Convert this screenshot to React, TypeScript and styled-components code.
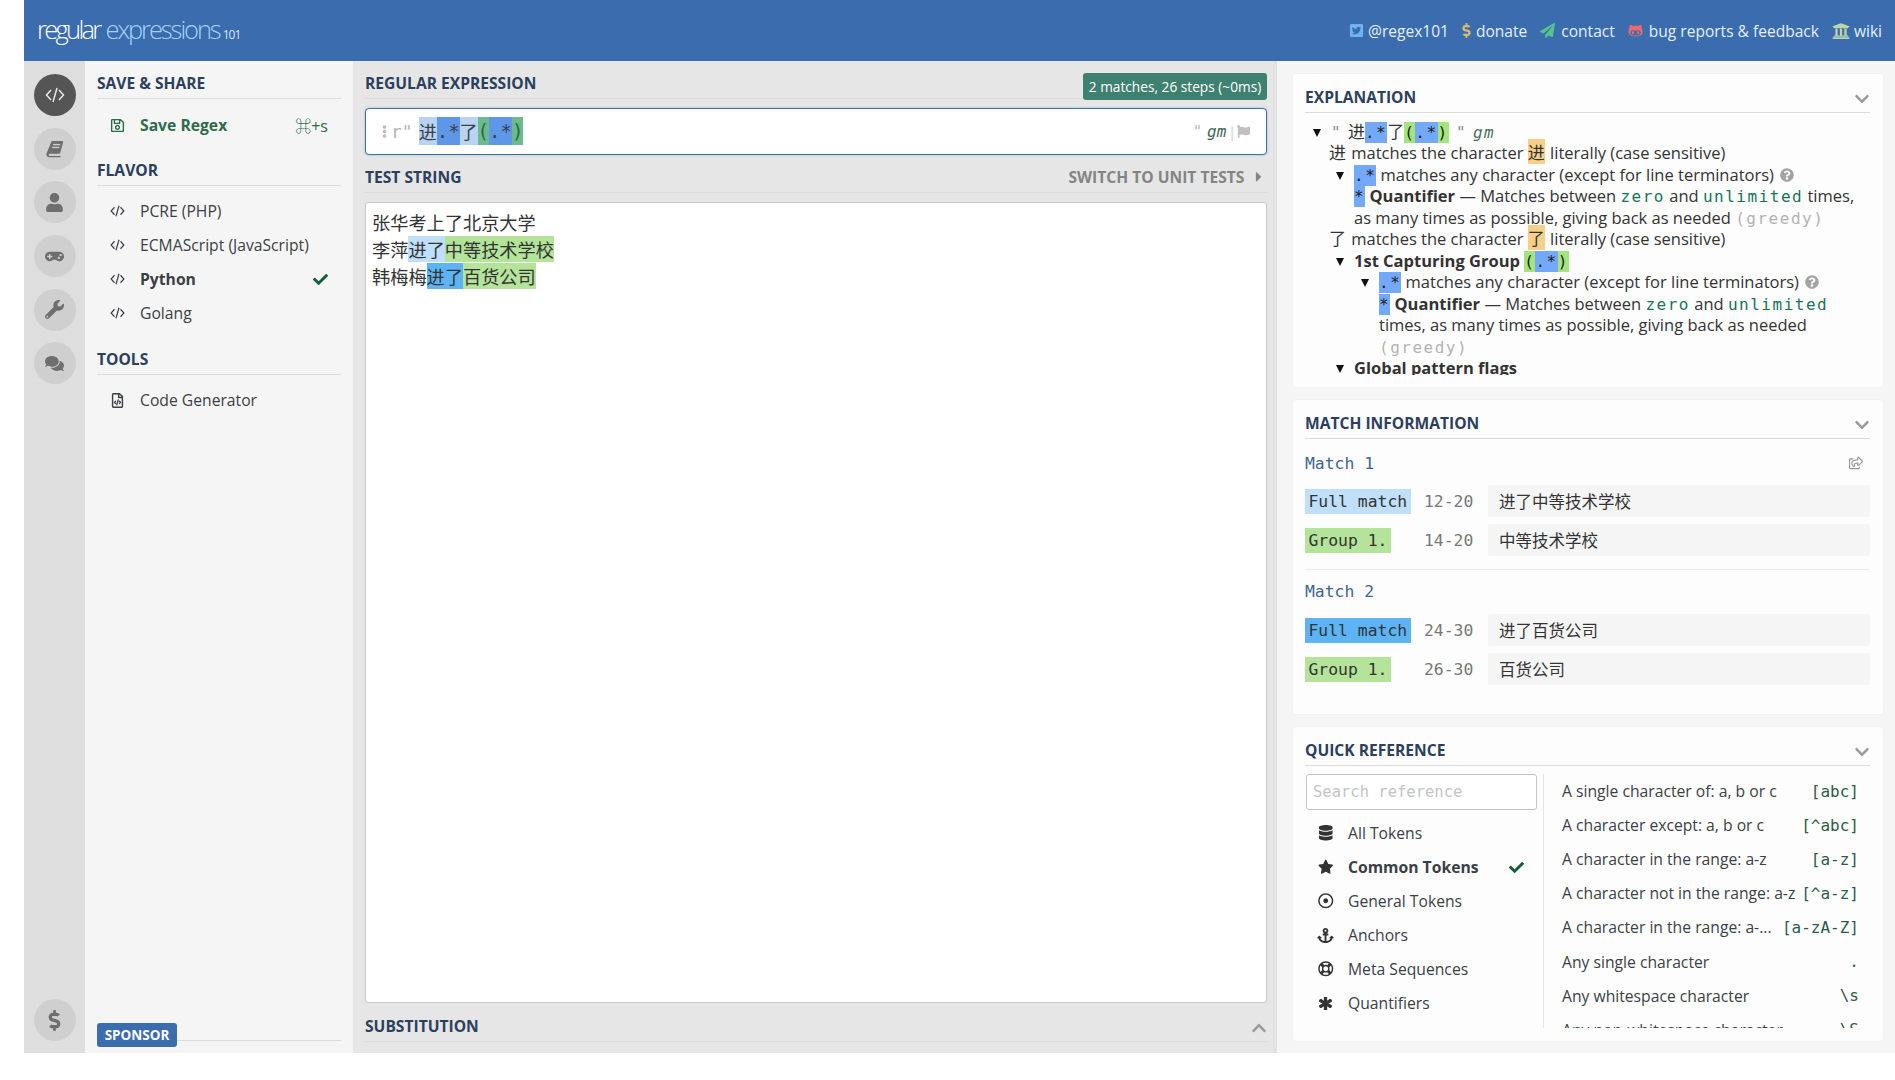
import React from 'react';
import styled, { createGlobalStyle } from 'styled-components';
import {
  FaUser, FaGamepad, FaWrench, FaComments, FaDollarSign, FaRegSave, FaCheck,
  FaRegFileCode, FaTwitterSquare, FaPaperPlane, FaGithubAlt, FaUniversity, FaFlag, FaQuestionCircle,
  FaChevronDown, FaChevronUp, FaRegShareSquare, FaDatabase, FaStar, FaRegDotCircle, FaAnchor, FaRegLifeRing,
  FaAsterisk, FaCaretRight, FaEllipsisV,
} from 'react-icons/fa';

const sans = `"Open Sans", "Noto Sans CJK SC", sans-serif`;
const mono = `"DejaVu Sans Mono", "Noto Sans CJK SC", monospace`;
const cjk = `"Noto Sans CJK SC", sans-serif`;

const Global = createGlobalStyle`
  html, body { margin: 0; padding: 0; background: #fff; height: 100%; overflow: hidden; }
  * { box-sizing: border-box; }
  body { font-family: ${sans}; color: #333; }
`;

const Page = styled.div`
  margin-left: 24px;
  width: 1871px;
  height: 1053px;
  display: flex;
  flex-direction: column;
`;

const Header = styled.header`
  height: 61px;
  flex: none;
  background: #3a6cae;
  display: flex;
  align-items: center;
  justify-content: space-between;
  padding: 0 13px 0 13px;
`;

const Logo = styled.div`
  font-weight: 300;
  font-size: 25.5px;
  letter-spacing: -2.7px;
  color: #fff;
  display: flex;
  align-items: baseline;
  margin-top: -4px;
  span { color: #a5d2f7; margin-left: 6px; letter-spacing: -2.1px; }
  small { font-size: 12px; font-weight: 400; letter-spacing: -0.9px; margin-left: 3px; color: #d8e6f5; }
`;

const Links = styled.nav`
  display: flex;
  align-items: center;
  gap: 13px;
`;

const HeadLink = styled.a`
  display: flex;
  align-items: center;
  color: #e6eff9;
  font-size: 15.55px;
`;

const LinkIcon = styled.span<{ $c: string; $w: number; $s: number; $shift?: number }>`
  width: ${(p) => p.$w}px;
  flex: none;
  display: flex;
  color: ${(p) => p.$c};
  font-size: ${(p) => p.$s}px;
  svg { flex: none; margin-left: ${(p) => p.$shift ?? 0}px; }
`;

const Main = styled.div`
  flex: 1;
  display: flex;
  min-height: 0;
`;

const Rail = styled.aside`
  width: 61px;
  flex: none;
  background: #dedede;
  display: flex;
  flex-direction: column;
  align-items: center;
  padding: 13px 0 12px;
  gap: 11.7px;
`;

const RailButton = styled.div<{ $active?: boolean; $bottom?: boolean }>`
  width: 42px;
  height: 42px;
  border-radius: 50%;
  flex: none;
  background: ${(p) => (p.$active ? '#555' : '#cfcfcf')};
  color: ${(p) => (p.$active ? '#eee' : '#6e6e6e')};
  display: flex;
  align-items: center;
  justify-content: center;
  font-size: ${(p) => (p.$bottom ? '21px' : '19px')};
  margin-top: ${(p) => (p.$bottom ? 'auto' : '0')};
`;

const LeftPanel = styled.aside`
  width: 268px;
  flex: none;
  background: #f5f5f5;
  padding: 9px 12px 6px 12px;
  display: flex;
  flex-direction: column;
`;

const SectionHead = styled.div<{ $top?: number }>`
  height: 29px;
  flex: none;
  display: flex;
  align-items: center;
  justify-content: space-between;
  border-bottom: 1px solid #dcdcdc;
  margin-top: ${(p) => p.$top ?? 0}px;
  padding-bottom: 2px;
  font-size: 15.6px;
  font-weight: 700;
  color: #2c405e;
  text-transform: uppercase;
`;

const MenuList = styled.div<{ $top?: number }>`
  margin-top: ${(p) => p.$top ?? 9}px;
  display: flex;
  flex-direction: column;
`;

const MenuRow = styled.div<{ $bold?: boolean; $green?: boolean }>`
  height: 34px;
  display: flex;
  align-items: center;
  padding-left: 13px;
  padding-right: 13px;
  font-size: 15.7px;
  font-weight: ${(p) => (p.$bold ? 700 : 400)};
  color: ${(p) => (p.$green ? '#2e6b4b' : '#3b3f46')};
`;

const MenuIcon = styled.span`
  width: 30px;
  flex: none;
  display: flex;
  align-items: center;
  font-size: 15px;
  color: inherit;
`;

const MenuTail = styled.span`
  margin-left: auto;
  display: flex;
  align-items: center;
  font-weight: 400;
  color: #0e6038;
  font-size: 15px;
`;

const Shortcut = styled(MenuTail)`
  font-size: 16px;
  color: #2e6b4b;
`;

const SponsorRow = styled.div`
  margin-top: auto;
  display: flex;
  align-items: flex-end;
`;

const SponsorTag = styled.div`
  width: 80px;
  height: 24px;
  border-radius: 3px;
  background: #3a6cae;
  color: #fff;
  font-size: 13.5px;
  font-weight: 700;
  display: flex;
  align-items: center;
  justify-content: center;
`;

const SponsorLine = styled.div`
  flex: 1;
  border-bottom: 1px solid #dcdcdc;
  margin-bottom: 6px;
`;

const Center = styled.section`
  width: 924px;
  flex: none;
  background: #e6e6e6;
  padding: 9px 10px 11px 12px;
  display: flex;
  flex-direction: column;
  box-shadow: inset -6px 0 6px -6px #d8d8d8;
`;

const Badge = styled.div`
  height: 27px;
  width: 184px;
  margin-top: 5px;
  margin-bottom: -2px;
  background: #3f8170;
  border-radius: 3px;
  color: #fff;
  font-size: 13.7px;
  font-weight: 400;
  text-transform: none;
  display: flex;
  align-items: center;
  justify-content: center;
`;

const RegexBox = styled.div`
  margin-top: 9px;
  height: 47px;
  flex: none;
  background: #fff;
  border: 1px solid #3f6fae;
  border-radius: 4px;
  box-shadow: 0 0 2px rgba(58, 108, 174, 0.5);
  display: flex;
  align-items: center;
  padding: 0 16px 0 12px;
  font-family: ${mono};
  font-size: 19px;
  color: #39424b;
`;

const Dots = styled.span`
  color: #bbb;
  font-size: 13px;
  display: flex;
  margin-right: 0;
`;

const Delim = styled.span`
  color: #b5b5b5;
  margin-right: 6px;
  font-size: 18px;
`;

const Sel = styled.span<{ $bg: string; $cjk?: boolean; $fg?: string }>`
  display: inline-flex;
  align-items: center;
  height: 28px;
  margin-top: -2px;
  background: ${(p) => p.$bg};
  color: ${(p) => p.$fg ?? 'inherit'};
  font-size: ${(p) => (p.$cjk ? '18px' : '19px')};
  font-family: ${(p) => (p.$cjk ? cjk : mono)};
`;

const Flags = styled.span`
  margin-left: auto;
  display: flex;
  align-items: center;
  font-style: italic;
  font-size: 16px;
  color: #3f6452;
  font-family: ${mono};
  i { font-style: normal; color: #b8b8b8; margin-right: 5px; font-size: 15px; }
  b { font-weight: 400; color: #ccc; font-style: normal; margin-left: 2px; margin-right: 1px; font-size: 14px; font-family: ${sans}; }
  svg { color: #c0c0c0; font-size: 13px; }
`;

const SwitchLink = styled.span`
  color: #848484;
  display: flex;
  align-items: center;
  gap: 7px;
  font-size: 15.6px;
`;

const TestBox = styled.div`
  flex: 1;
  min-height: 0;
  margin-top: 9px;
  background: #fff;
  border: 1px solid #c8c8c8;
  border-radius: 3px;
  padding: 6px 6px;
  font-family: ${cjk};
  font-size: 18.2px;
  line-height: 27px;
  color: #333;
`;

const Hl = styled.span<{ $bg: string }>`
  background: ${(p) => p.$bg};
`;

const RightPanel = styled.section`
  flex: 1;
  background: #f5f5f5;
  padding: 13px 12px 12px 16px;
  display: flex;
  flex-direction: column;
  gap: 13px;
`;

const Card = styled.div<{ $h: number }>`
  height: ${(p) => p.$h}px;
  flex: none;
  background: #fdfdfd;
  border-radius: 3px;
  box-shadow: 0 0 2px rgba(0, 0, 0, 0.06);
  padding: 10px 13px 0 12px;
  display: flex;
  flex-direction: column;
`;

const Chevron = styled.span`
  color: #9a9a9a;
  font-size: 16px;
  display: flex;
  position: relative;
  top: 2px;
`;

const ExplBody = styled.div`
  margin-top: 8px;
  height: 254px;
  overflow: hidden;
  font-size: 16.5px;
  line-height: 21.45px;
  color: #333;
  font-family: ${sans};
`;

const Tree = styled.div<{ $x: number }>`
  display: flex;
  padding-left: ${(p) => p.$x}px;
`;

const Arrow = styled.span`
  width: 18px;
  flex: none;
  position: relative;
  &::before {
    content: '';
    position: absolute;
    left: 0;
    top: 8px;
    border-left: 4.5px solid transparent;
    border-right: 4.5px solid transparent;
    border-top: 8px solid #111;
  }
`;

const TreeText = styled.div`
  flex: 1;
  min-width: 0;
`;

const Token = styled.span<{ $bg: string }>`
  background: ${(p) => p.$bg};
  padding: 1px 0;
  font-family: ${mono};
  font-size: 16px;
  letter-spacing: 1.5px;
  line-height: 1;
  color: #222;
`;

const Cjk = styled.span`
  font-family: ${cjk};
  font-size: 17px;
  letter-spacing: 0;
  line-height: 1;
`;

const Literal = styled(Cjk)`
  background: #f6d088;
  margin: 0 1px 0 0;
`;

const RowCjk = styled(Cjk)`
  margin-right: 1px;
`;

const Kw = styled.span`
  font-family: ${mono};
  font-size: 16px;
  line-height: 1;
  letter-spacing: 1.5px;
  color: #17735a;
`;

const Greedy = styled(Kw)`
  color: #b3b3b3;
`;

const Help = styled.span`
  color: #a3a3a3;
  font-size: 14px;
  line-height: 1;
  margin-left: 6px;
  vertical-align: -1px;
  display: inline-block;
`;

const Gm = styled.span`
  font-family: ${mono};
  font-style: italic;
  font-size: 16px;
  letter-spacing: 1.5px;
  line-height: 1;
  color: #4a6e5c;
`;

const Quote = styled.span`
  font-family: ${mono};
  font-size: 16px;
  line-height: 1;
  margin: 0 3px;
  color: #8b8b8b;
`;

const LeadQuote = styled(Quote)`
  margin-left: 0;
`;

const MatchTitle = styled.div<{ $top: number }>`
  height: 22px;
  margin-top: ${(p) => p.$top}px;
  display: flex;
  align-items: center;
  justify-content: space-between;
  font-family: ${mono};
  font-size: 16.4px;
  color: #3f6590;
  padding-right: 7px;
  svg { color: #999; font-size: 14px; }
`;

const MatchRow = styled.div<{ $top: number }>`
  margin-top: ${(p) => p.$top}px;
  height: 32px;
  display: flex;
  align-items: center;
`;

const MatchLabelCell = styled.div`
  width: 119px;
  flex: none;
  display: flex;
`;

const MatchLabel = styled.span<{ $bg: string }>`
  height: 25px;
  line-height: 25px;
  padding: 0 3.5px;
  background: ${(p) => p.$bg};
  font-family: ${mono};
  font-size: 16.4px;
  color: #333;
`;

const Range = styled.span`
  width: 64px;
  flex: none;
  font-family: ${mono};
  font-size: 16.4px;
  color: #777;
`;

const MatchValue = styled.div`
  flex: 1;
  height: 32px;
  background: #f5f5f5;
  border-radius: 3px;
  padding: 0 11px;
  display: flex;
  align-items: center;
  font-family: ${cjk};
  font-size: 16.5px;
  color: #333;
`;

const Divider = styled.div`
  margin-top: 13px;
  border-bottom: 1px solid #ececec;
`;

const QuickGrid = styled.div`
  margin-top: 8px;
  display: flex;
  height: 254px;
`;

const QuickLeft = styled.div`
  width: 239px;
  flex: none;
  border-right: 1px solid #e4e4e4;
  padding-right: 7px;
`;

const Search = styled.div`
  height: 36px;
  width: 231px;
  margin-left: 1px;
  border: 1px solid #c4c4c4;
  border-radius: 3px;
  background: #fff;
  display: flex;
  align-items: center;
  padding-left: 6px;
  font-family: ${mono};
  font-size: 15.5px;
  color: #c4c4c4;
`;

const CatList = styled.div`
  margin-top: 6px;
`;

const Cat = styled.div<{ $bold?: boolean }>`
  height: 34px;
  display: flex;
  align-items: center;
  padding-left: 13px;
  padding-right: 12px;
  font-size: 15.7px;
  color: #3b3f46;
  font-weight: ${(p) => (p.$bold ? 700 : 400)};
`;

const CatIcon = styled.span`
  width: 30px;
  flex: none;
  display: flex;
  color: #333;
  font-size: 15.5px;
`;

const AnchorGlyph = styled(FaAnchor)`
  font-size: 17px;
  margin-left: -1px;
`;

const AsteriskGlyph = styled(FaAsterisk)`
  font-size: 13px;
  margin-left: 1px;
  stroke: currentColor;
  stroke-width: 45px;
`;

const QuickRight = styled.div`
  flex: 1;
  overflow: hidden;
  padding: 0 11px 0 18px;
`;

const RefRow = styled.div`
  height: 34.1px;
  display: flex;
  align-items: center;
  justify-content: space-between;
  font-size: 15.7px;
  color: #3b3f46;
  white-space: nowrap;
  code {
    font-family: ${mono};
    font-size: 16px;
    color: #2d5b4b;
  }
`;

const refs: [string, string][] = [
  ['A single character of: a, b or c', '[abc]'],
  ['A character except: a, b or c', '[^abc]'],
  ['A character in the range: a-z', '[a-z]'],
  ['A character not in the range: a-z', '[^a-z]'],
  ['A character in the range: a-...', '[a-zA-Z]'],
  ['Any single character', '.'],
  ['Any whitespace character', '\\s'],
  ['Any non-whitespace character', '\\S'],
];

const B = '#74a9f9';
const G = '#a3e57c';

function CodeIcon({ w = 15, sw = 1.2 }: { w?: number; sw?: number }) {
  return (
    <svg width={w} height={w * 0.8} viewBox="0 0 20 16" fill="none" stroke="currentColor" strokeWidth={sw * (20 / w)}>
      <polyline points="6,3 1.5,8 6,13" />
      <line x1="12" y1="1" x2="8" y2="15" />
      <polyline points="14,3 18.5,8 14,13" />
    </svg>
  );
}

function BookIcon() {
  return (
    <svg width="19" height="19" viewBox="0 0 20 20" fill="currentColor">
      <path d="M7 2h11a1.2 1.2 0 0 1 1.1 1.5l-3 10.8a1.8 1.8 0 0 1-1.7 1.3H5a1.2 1.2 0 0 0 0 2.4h10.3l1-.2-.3 1.4H4.6A3 3 0 0 1 1.7 15Z" />
      <rect x="8.5" y="5.2" width="7.5" height="1.4" fill="#cfcfcf" />
      <rect x="7.6" y="8.2" width="7.5" height="1.4" fill="#cfcfcf" />
    </svg>
  );
}

function Quantifier() {
  return (
    <>
      <Token $bg={B}>*</Token> <b>Quantifier</b> — Matches between <Kw>zero</Kw> and <Kw>unlimited</Kw> times, as many
      times as possible, giving back as needed <Greedy>(greedy)</Greedy>
    </>
  );
}

export default function App() {
  return (
    <Page>
      <Global />
      <Header>
        <Logo>
          regular<span>expressions</span>
          <small>101</small>
        </Logo>
        <Links>
          <HeadLink><LinkIcon $c="#6fb3f2" $w={19} $s={15}><FaTwitterSquare /></LinkIcon>@regex101</HeadLink>
          <HeadLink><LinkIcon $c="#d5bb6c" $w={14} $s={15} $shift={-3}><FaDollarSign /></LinkIcon>donate</HeadLink>
          <HeadLink><LinkIcon $c="#54c48d" $w={21} $s={15}><FaPaperPlane /></LinkIcon>contact</HeadLink>
          <HeadLink><LinkIcon $c="#ef6a70" $w={21} $s={15}><FaGithubAlt /></LinkIcon>bug reports &amp; feedback</HeadLink>
          <HeadLink><LinkIcon $c="#bcd6a8" $w={22} $s={18}><FaUniversity /></LinkIcon>wiki</HeadLink>
        </Links>
      </Header>
      <Main>
        <Rail>
          <RailButton $active><CodeIcon w={20} sw={1.4} /></RailButton>
          <RailButton><BookIcon /></RailButton>
          <RailButton><FaUser /></RailButton>
          <RailButton><FaGamepad /></RailButton>
          <RailButton><FaWrench /></RailButton>
          <RailButton><FaComments /></RailButton>
          <RailButton $bottom><FaDollarSign /></RailButton>
        </Rail>
        <LeftPanel>
          <SectionHead>Save &amp; Share</SectionHead>
          <MenuList>
            <MenuRow $bold $green>
              <MenuIcon><FaRegSave /></MenuIcon>Save Regex<Shortcut>⌘+s</Shortcut>
            </MenuRow>
          </MenuList>
          <SectionHead $top={15}>Flavor</SectionHead>
          <MenuList $top={8}>
            <MenuRow><MenuIcon><CodeIcon /></MenuIcon>PCRE (PHP)</MenuRow>
            <MenuRow><MenuIcon><CodeIcon /></MenuIcon>ECMAScript (JavaScript)</MenuRow>
            <MenuRow $bold><MenuIcon><CodeIcon /></MenuIcon>Python<MenuTail><FaCheck /></MenuTail></MenuRow>
            <MenuRow><MenuIcon><CodeIcon /></MenuIcon>Golang</MenuRow>
          </MenuList>
          <SectionHead $top={16}>Tools</SectionHead>
          <MenuList $top={8}>
            <MenuRow><MenuIcon><FaRegFileCode /></MenuIcon>Code Generator</MenuRow>
          </MenuList>
          <SponsorRow>
            <SponsorTag>SPONSOR</SponsorTag>
            <SponsorLine />
          </SponsorRow>
        </LeftPanel>
        <Center>
          <SectionHead>
            Regular Expression
            <Badge>2 matches, 26 steps (~0ms)</Badge>
          </SectionHead>
          <RegexBox>
            <Dots><FaEllipsisV /></Dots>
            <Delim>r"</Delim>
            <Sel $bg="#b9d3f2" $cjk>进</Sel>
            <Sel $bg="#5f97e8">.*</Sel>
            <Sel $bg="#b9d3f2" $cjk>了</Sel>
            <Sel $bg="#6fba8c" $fg="#1f6a46">(</Sel>
            <Sel $bg="#5f97e8">.*</Sel>
            <Sel $bg="#6fba8c" $fg="#1f6a46">)</Sel>
            <Flags><i>"</i>gm<b>|</b><FaFlag /></Flags>
          </RegexBox>
          <SectionHead $top={9}>
            Test String
            <SwitchLink>Switch to unit tests <FaCaretRight /></SwitchLink>
          </SectionHead>
          <TestBox>
            张华考上了北京大学<br />
            李萍<Hl $bg="#bfdffb">进了</Hl><Hl $bg="#b4e39a">中等技术学校</Hl><br />
            韩梅梅<Hl $bg="#5cb4f5">进了</Hl><Hl $bg="#b4e39a">百货公司</Hl>
          </TestBox>
          <SectionHead $top={10}>
            Substitution
            <Chevron><FaChevronUp /></Chevron>
          </SectionHead>
        </Center>
        <RightPanel>
          <Card $h={313}>
            <SectionHead>Explanation<Chevron><FaChevronDown /></Chevron></SectionHead>
            <ExplBody>
              <Tree $x={8}>
                <Arrow />
                <TreeText>
                  <LeadQuote>"</LeadQuote> <Cjk>进</Cjk><Token $bg={B}>.*</Token><Cjk>了</Cjk>
                  <Token $bg={G}>(</Token><Token $bg={B}>.*</Token><Token $bg={G}>)</Token> <Quote>"</Quote> <Gm>gm</Gm>
                </TreeText>
              </Tree>
              <Tree $x={24}>
                <TreeText><RowCjk>进</RowCjk> matches the character <Literal>进</Literal> literally (case sensitive)</TreeText>
              </Tree>
              <Tree $x={31}>
                <Arrow />
                <TreeText>
                  <Token $bg={B}>.*</Token> matches any character (except for line terminators)
                  <Help><FaQuestionCircle /></Help>
                </TreeText>
              </Tree>
              <Tree $x={49}>
                <TreeText><Quantifier /></TreeText>
              </Tree>
              <Tree $x={24}>
                <TreeText><RowCjk>了</RowCjk> matches the character <Literal>了</Literal> literally (case sensitive)</TreeText>
              </Tree>
              <Tree $x={31}>
                <Arrow />
                <TreeText>
                  <b>1st Capturing Group</b> <Token $bg={G}>(</Token><Token $bg={B}>.*</Token><Token $bg={G}>)</Token>
                </TreeText>
              </Tree>
              <Tree $x={56}>
                <Arrow />
                <TreeText>
                  <Token $bg={B}>.*</Token> matches any character (except for line terminators)
                  <Help><FaQuestionCircle /></Help>
                </TreeText>
              </Tree>
              <Tree $x={74}>
                <TreeText><Quantifier /></TreeText>
              </Tree>
              <Tree $x={31}>
                <Arrow />
                <TreeText><b>Global pattern flags</b></TreeText>
              </Tree>
            </ExplBody>
          </Card>
          <Card $h={314}>
            <SectionHead>Match Information<Chevron><FaChevronDown /></Chevron></SectionHead>
            <MatchTitle $top={13}>Match 1<FaRegShareSquare /></MatchTitle>
            <MatchRow $top={11}>
              <MatchLabelCell><MatchLabel $bg="#bfdffb">Full match</MatchLabel></MatchLabelCell>
              <Range>12-20</Range>
              <MatchValue>进了中等技术学校</MatchValue>
            </MatchRow>
            <MatchRow $top={7}>
              <MatchLabelCell><MatchLabel $bg="#b4e39a">Group 1.</MatchLabel></MatchLabelCell>
              <Range>14-20</Range>
              <MatchValue>中等技术学校</MatchValue>
            </MatchRow>
            <Divider />
            <MatchTitle $top={10}>Match 2</MatchTitle>
            <MatchRow $top={12}>
              <MatchLabelCell><MatchLabel $bg="#5cb4f5">Full match</MatchLabel></MatchLabelCell>
              <Range>24-30</Range>
              <MatchValue>进了百货公司</MatchValue>
            </MatchRow>
            <MatchRow $top={7}>
              <MatchLabelCell><MatchLabel $bg="#b4e39a">Group 1.</MatchLabel></MatchLabelCell>
              <Range>26-30</Range>
              <MatchValue>百货公司</MatchValue>
            </MatchRow>
          </Card>
          <Card $h={314}>
            <SectionHead>Quick Reference<Chevron><FaChevronDown /></Chevron></SectionHead>
            <QuickGrid>
              <QuickLeft>
                <Search>Search reference</Search>
                <CatList>
                  <Cat><CatIcon><FaDatabase /></CatIcon>All Tokens</Cat>
                  <Cat $bold><CatIcon><FaStar /></CatIcon>Common Tokens<MenuTail><FaCheck /></MenuTail></Cat>
                  <Cat><CatIcon><FaRegDotCircle /></CatIcon>General Tokens</Cat>
                  <Cat><CatIcon><AnchorGlyph /></CatIcon>Anchors</Cat>
                  <Cat><CatIcon><FaRegLifeRing /></CatIcon>Meta Sequences</Cat>
                  <Cat><CatIcon><AsteriskGlyph /></CatIcon>Quantifiers</Cat>
                </CatList>
              </QuickLeft>
              <QuickRight>
                {refs.map(([t, c]) => (
                  <RefRow key={c}><span>{t}</span><code>{c}</code></RefRow>
                ))}
              </QuickRight>
            </QuickGrid>
          </Card>
        </RightPanel>
      </Main>
    </Page>
  );
}
